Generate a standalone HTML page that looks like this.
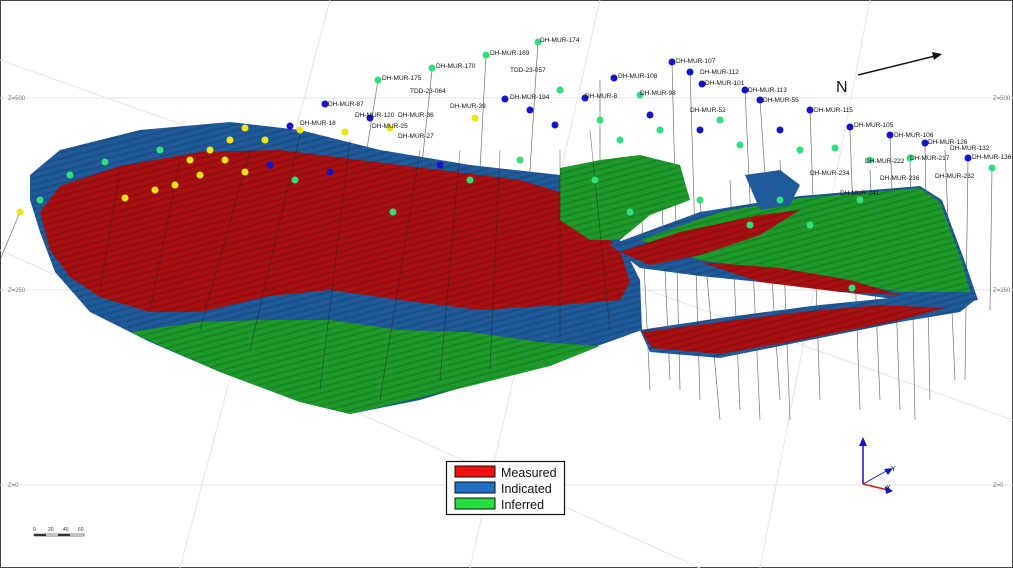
<!DOCTYPE html>
<html><head><meta charset="utf-8"><style>
html,body{margin:0;padding:0;background:#fff}
svg{display:block;font-family:"Liberation Sans",sans-serif}
</style></head><body>
<svg width="1013" height="568" viewBox="0 0 1013 568" xmlns="http://www.w3.org/2000/svg">
<defs>
<pattern id="st" width="8" height="6" patternUnits="userSpaceOnUse" patternTransform="rotate(-15)">
<rect width="8" height="2" fill="#000" opacity="0.12"/>
</pattern>
</defs>
<rect x="0.5" y="0.5" width="1012" height="567" fill="#fff" stroke="#444"/>
<g stroke="#e6e6e6" stroke-width="1" fill="none">
<line x1="0" y1="98" x2="1013" y2="98"/><line x1="0" y1="290" x2="1013" y2="290"/><line x1="0" y1="485" x2="1013" y2="485"/>
<line x1="330" y1="0" x2="180" y2="568"/><line x1="600" y1="0" x2="470" y2="568"/><line x1="870" y1="0" x2="760" y2="568"/>
<line x1="0" y1="60" x2="1013" y2="420"/><line x1="0" y1="250" x2="700" y2="568"/>
</g>
<g font-size="6" fill="#777">
<text x="8" y="100">Z=500</text><text x="8" y="292">Z=250</text><text x="8" y="487">Z=0</text>
<text x="993" y="100">Z=500</text><text x="993" y="292">Z=250</text><text x="993" y="487">Z=0</text>
</g>
<g stroke="#333" stroke-width="0.7" opacity="0.7">
<line x1="378" y1="80" x2="330" y2="380"/><line x1="432" y1="70" x2="400" y2="370"/><line x1="486" y1="55" x2="470" y2="360"/>
<line x1="538" y1="42" x2="520" y2="330"/><line x1="600" y1="80" x2="600" y2="300"/><line x1="672" y1="62" x2="680" y2="390"/>
<line x1="690" y1="70" x2="700" y2="400"/><line x1="745" y1="90" x2="760" y2="420"/><line x1="760" y1="100" x2="780" y2="400"/>
<line x1="810" y1="110" x2="820" y2="400"/><line x1="850" y1="130" x2="860" y2="410"/><line x1="890" y1="135" x2="900" y2="410"/>
<line x1="925" y1="145" x2="930" y2="400"/><line x1="945" y1="150" x2="955" y2="380"/><line x1="968" y1="158" x2="965" y2="380"/>
<line x1="992" y1="168" x2="990" y2="310"/><line x1="20" y1="212" x2="0" y2="260"/><line x1="700" y1="200" x2="720" y2="420"/>
<line x1="730" y1="180" x2="740" y2="410"/><line x1="640" y1="180" x2="650" y2="390"/><line x1="660" y1="160" x2="670" y2="380"/>
<line x1="780" y1="160" x2="790" y2="420"/><line x1="870" y1="170" x2="880" y2="400"/><line x1="910" y1="160" x2="915" y2="420"/>
</g>
<polygon fill="#1f5a9a" points="30,175 60,150 140,130 230,122 300,130 380,150 470,165 560,175 580,200 620,240 640,280 642,330 600,345 550,362 470,385 420,400 350,414 300,402 220,372 150,342 90,312 55,272 40,232 30,200"/>
<polygon fill="#a81012" points="40,212 60,186 120,166 200,152 280,150 360,160 440,170 520,180 560,192 592,222 620,250 630,282 620,300 560,305 480,310 400,300 330,290 270,296 200,312 150,312 100,297 70,277 50,250"/>
<polygon fill="#1d9a2a" points="130,332 200,322 260,320 330,320 400,330 470,332 540,342 600,346 550,366 470,386 350,414 300,402 220,372"/>
<polygon fill="url(#st)" points="30,175 60,150 140,130 230,122 300,130 380,150 470,165 560,175 580,200 620,240 640,280 642,330 600,345 550,362 470,385 420,400 350,414 300,402 220,372 150,342 90,312 55,272 40,232 30,200"/>
<polygon fill="#1d9a2a" points="560,168 600,160 640,155 680,165 690,200 650,215 620,240 590,240 560,220"/>
<polygon fill="url(#st)" points="560,168 600,160 640,155 680,165 690,200 650,215 620,240 590,240 560,220"/>
<polygon fill="#1f5a9a" points="610,245 700,212 800,196 920,186 942,200 965,262 978,300 950,305 900,300 800,286 700,276 640,268"/>
<polygon fill="#1d9a2a" points="640,240 720,212 800,198 920,188 940,202 962,262 970,292 900,292 800,274 700,260"/>
<polygon fill="#a81012" points="620,252 680,232 760,215 800,210 760,235 700,255 650,265"/>
<polygon fill="#a81012" points="700,262 780,268 850,280 900,295 840,292 760,282"/>
<polygon fill="url(#st)" points="610,245 700,212 800,196 920,186 942,200 965,262 978,300 950,305 900,300 800,286 700,276 640,268"/>
<polygon fill="#1f5a9a" points="640,330 720,318 820,305 890,298 975,300 960,312 900,322 800,342 720,358 650,352"/>
<polygon fill="#a81012" points="642,332 720,322 800,312 880,305 945,308 900,320 800,340 720,354 652,348"/>
<polygon fill="url(#st)" points="640,330 720,318 820,305 890,298 975,300 960,312 900,322 800,342 720,358 650,352"/>
<polygon fill="#1f5a9a" points="745,175 780,170 800,185 790,205 760,210"/>
<g stroke="#222" stroke-width="0.7" opacity="0.55">
<line x1="250" y1="150" x2="200" y2="330"/><line x1="300" y1="135" x2="250" y2="350"/><line x1="350" y1="140" x2="320" y2="390"/>
<line x1="420" y1="150" x2="380" y2="400"/><line x1="460" y1="150" x2="440" y2="380"/><line x1="500" y1="150" x2="490" y2="370"/>
<line x1="560" y1="150" x2="560" y2="340"/><line x1="180" y1="160" x2="150" y2="310"/><line x1="120" y1="170" x2="100" y2="290"/>
<line x1="590" y1="130" x2="610" y2="330"/>
</g>
<g>
<g fill="#1414c8">
<circle cx="325" cy="104" r="3.5"/><circle cx="290" cy="126" r="3.5"/><circle cx="370" cy="118" r="3.5"/><circle cx="505" cy="99" r="3.5"/>
<circle cx="585" cy="98" r="3.5"/><circle cx="614" cy="78" r="3.5"/><circle cx="672" cy="62" r="3.5"/><circle cx="690" cy="72" r="3.5"/>
<circle cx="702" cy="84" r="3.5"/><circle cx="745" cy="90" r="3.5"/><circle cx="760" cy="100" r="3.5"/><circle cx="810" cy="110" r="3.5"/>
<circle cx="850" cy="127" r="3.5"/><circle cx="890" cy="135" r="3.5"/><circle cx="925" cy="143" r="3.5"/><circle cx="968" cy="158" r="3.5"/>
<circle cx="530" cy="110" r="3.5"/><circle cx="555" cy="125" r="3.5"/><circle cx="650" cy="115" r="3.5"/><circle cx="700" cy="130" r="3.5"/>
<circle cx="270" cy="165" r="3.5"/><circle cx="330" cy="172" r="3.5"/><circle cx="440" cy="165" r="3.5"/><circle cx="780" cy="130" r="3.5"/>
</g>
<g fill="#2ee07a">
<circle cx="378" cy="80" r="3.5"/><circle cx="432" cy="68" r="3.5"/><circle cx="486" cy="55" r="3.5"/><circle cx="538" cy="42" r="3.5"/>
<circle cx="560" cy="90" r="3.5"/><circle cx="640" cy="95" r="3.5"/><circle cx="600" cy="120" r="3.5"/><circle cx="620" cy="140" r="3.5"/>
<circle cx="660" cy="130" r="3.5"/><circle cx="720" cy="120" r="3.5"/><circle cx="740" cy="145" r="3.5"/><circle cx="800" cy="150" r="3.5"/>
<circle cx="835" cy="148" r="3.5"/><circle cx="870" cy="160" r="3.5"/><circle cx="910" cy="158" r="3.5"/><circle cx="992" cy="168" r="3.5"/>
<circle cx="105" cy="162" r="3.5"/><circle cx="70" cy="175" r="3.5"/><circle cx="40" cy="200" r="3.5"/><circle cx="393" cy="212" r="3.5"/>
<circle cx="595" cy="180" r="3.5"/><circle cx="630" cy="212" r="3.5"/><circle cx="700" cy="200" r="3.5"/><circle cx="750" cy="225" r="3.5"/>
<circle cx="780" cy="200" r="3.5"/><circle cx="810" cy="225" r="3.5"/><circle cx="852" cy="288" r="3.5"/><circle cx="860" cy="200" r="3.5"/>
<circle cx="295" cy="180" r="3.5"/><circle cx="470" cy="180" r="3.5"/><circle cx="520" cy="160" r="3.5"/><circle cx="160" cy="150" r="3.5"/>
</g>
<g fill="#f0e614">
<circle cx="20" cy="212" r="3.5"/><circle cx="155" cy="190" r="3.5"/><circle cx="125" cy="198" r="3.5"/><circle cx="175" cy="185" r="3.5"/>
<circle cx="210" cy="150" r="3.5"/><circle cx="230" cy="140" r="3.5"/><circle cx="245" cy="128" r="3.5"/><circle cx="265" cy="140" r="3.5"/>
<circle cx="300" cy="130" r="3.5"/><circle cx="345" cy="132" r="3.5"/><circle cx="390" cy="128" r="3.5"/><circle cx="475" cy="118" r="3.5"/>
<circle cx="200" cy="175" r="3.5"/><circle cx="245" cy="172" r="3.5"/><circle cx="225" cy="160" r="3.5"/><circle cx="190" cy="160" r="3.5"/>
</g>
</g>
<g font-size="6.5" fill="#111">
<text x="540" y="42">DH-MUR-174</text><text x="490" y="55">DH-MUR-169</text><text x="436" y="68">DH-MUR-170</text><text x="382" y="80">DH-MUR-175</text>
<text x="510" y="72">TDD-23-057</text><text x="676" y="63">DH-MUR-107</text><text x="700" y="74">DH-MUR-112</text><text x="705" y="85">DH-MUR-101</text>
<text x="748" y="92">DH-MUR-113</text><text x="763" y="102">DH-MUR-55</text><text x="814" y="112">DH-MUR-115</text><text x="854" y="127">DH-MUR-105</text>
<text x="894" y="137">DH-MUR-106</text><text x="928" y="144">DH-MUR-126</text><text x="950" y="150">DH-MUR-132</text><text x="972" y="159">DH-MUR-136</text>
<text x="328" y="106">DH-MUR-87</text><text x="355" y="117">DH-MUR-120</text><text x="410" y="93">TDD-23-064</text><text x="450" y="108">DH-MUR-39</text>
<text x="300" y="125">DH-MUR-18</text><text x="398" y="117">DH-MUR-36</text><text x="372" y="128">DH-MUR-25</text><text x="398" y="138">DH-MUR-27</text>
<text x="618" y="78">DH-MUR-108</text><text x="585" y="98">DH-MUR-8</text><text x="640" y="95">DH-MUR-98</text><text x="510" y="99">DH-MUR-194</text>
<text x="690" y="112">DH-MUR-52</text><text x="865" y="163">DH-MUR-222</text><text x="910" y="160">DH-MUR-217</text><text x="935" y="178">DH-MUR-232</text>
<text x="810" y="175">DH-MUR-234</text><text x="840" y="195">DH-MUR-241</text><text x="880" y="180">DH-MUR-236</text>
</g>
<text x="836" y="92" font-size="16" fill="#111">N</text>
<line x1="858" y1="75" x2="935" y2="56" stroke="#111" stroke-width="1.5"/>
<polygon points="942,54 932,52 934,60" fill="#111"/>
<line x1="863" y1="484" x2="863" y2="445" stroke="#1414c8" stroke-width="1.5"/>
<polygon points="863,437 859,446 867,446" fill="#1414c8"/>
<line x1="863" y1="484" x2="888" y2="470" stroke="#1414c8" stroke-width="1"/>
<line x1="863" y1="484" x2="888" y2="490" stroke="#e01414" stroke-width="1.5"/>
<polygon points="893,491 885,486 886,494" fill="#1414c8"/>
<polygon points="893,468 884,469 888,475" fill="#1414c8"/>
<text x="891" y="471" font-size="7">Y</text><text x="886" y="490" font-size="7">X</text>
<rect x="446.5" y="461.5" width="118" height="53" fill="#fff" stroke="#111" stroke-width="1.2"/>
<rect x="455" y="466" width="40" height="11" fill="#f01010" stroke="#111"/>
<rect x="455" y="482" width="40" height="11" fill="#1f6fc8" stroke="#111"/>
<rect x="455" y="498" width="40" height="11" fill="#22e040" stroke="#111"/>
<g font-size="12.5" fill="#111"><text x="501" y="477">Measured</text><text x="501" y="493">Indicated</text><text x="501" y="509">Inferred</text></g>
<g font-size="5" fill="#333"><text x="33" y="531">0</text><text x="48" y="531">20</text><text x="63" y="531">40</text><text x="78" y="531">60</text></g>
<rect x="34" y="534" width="50" height="2" fill="#fff" stroke="#333" stroke-width="0.6"/>
<rect x="34" y="534" width="12" height="2" fill="#333"/><rect x="58" y="534" width="12" height="2" fill="#333"/>
</svg>
</body></html>
